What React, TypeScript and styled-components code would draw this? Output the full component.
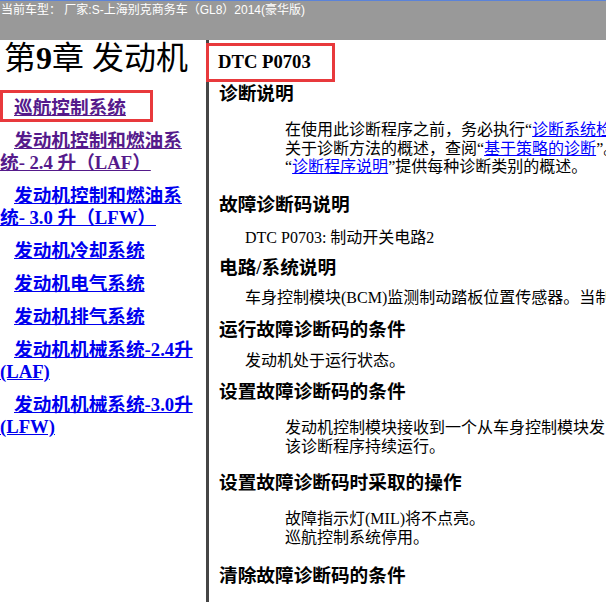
import styled, { createGlobalStyle } from 'styled-components';

const serif = '"Liberation Serif", "Noto Sans CJK SC", serif';

const GlobalStyle = createGlobalStyle`
    html, body {
        margin: 0;
        padding: 0;
        background: #fff;
    }
    body {
        font-family: ${serif};
        color: #000;
    }
`;

const Page = styled.div`
    position: relative;
    display: flex;
    flex-direction: column;
    width: 100vw;
    height: 100vh;
    overflow: hidden;
`;

const TopBar = styled.div`
    flex: 0 0 40px;
    box-sizing: border-box;
    border-top: 1px solid #5b83d9;
    background: #999999;
    color: #fff;
    font-family: "Liberation Sans", "Noto Sans CJK SC", sans-serif;
    font-size: 12px;
    line-height: 18px;
    padding: 0 0 0 1px;
    white-space: nowrap;
`;

const Frames = styled.div`
    flex: 1;
    display: flex;
    min-height: 0;
`;

const Toc = styled.nav`
    flex: 0 0 206px;
    box-sizing: border-box;
    padding: 0 8px 0 0;
    overflow: hidden;
`;

const Chapter = styled.h1`
    margin: 0 0 21px 4px;
    font-size: 32px;
    line-height: 36px;
    font-weight: normal;
    white-space: nowrap;
    & b {
        font-weight: bold;
    }
`;

const TocItem = styled.p`
    margin: 0 0 11px;
    font-size: 18.67px;
    line-height: 22px;
    font-weight: bold;
    text-indent: 14px;
`;

const TocLink = styled.a<{ $visited?: boolean }>`
    color: ${(p) => (p.$visited ? '#551a8b' : '#0000ee')};
    text-decoration: underline;
`;

const Content = styled.main`
    flex: 1;
    min-width: 0;
    box-sizing: border-box;
    border-left: 3px solid #464646;
    padding-left: 9px;
    overflow: hidden;
`;

const DtcTitle = styled.h1`
    margin: 10px 0 0;
    font-size: 18.67px;
    line-height: 24px;
    font-weight: bold;
`;

const Heading = styled.h2<{ $mt: number }>`
    margin: ${(p) => p.$mt}px 0 0 1px;
    font-size: 18.67px;
    line-height: 22px;
    font-weight: bold;
    white-space: nowrap;
`;

// body text is clipped at the frame edge, as in the help viewer
const Text = styled.div<{ $mt: number; $indent: number; $lh?: number }>`
    margin: ${(p) => p.$mt}px 0 0 ${(p) => p.$indent}px;
    font-size: 16px;
    line-height: ${(p) => p.$lh ?? 20}px;
    white-space: nowrap;
    & a {
        color: #0000ff;
        text-decoration: underline;
    }
`;

const Callout = styled.div<{ $x: number; $y: number; $w: number; $h: number }>`
    position: absolute;
    left: ${(p) => p.$x}px;
    top: ${(p) => p.$y}px;
    width: ${(p) => p.$w}px;
    height: ${(p) => p.$h}px;
    box-sizing: border-box;
    border: 3px solid #e8393c;
    pointer-events: none;
`;

const tocItems = [
    { label: '巡航控制系统', visited: true },
    { label: '发动机控制和燃油系统- 2.4 升（LAF）', visited: true },
    { label: '发动机控制和燃油系统- 3.0 升（LFW）' },
    { label: '发动机冷却系统' },
    { label: '发动机电气系统' },
    { label: '发动机排气系统' },
    { label: '发动机机械系统-2.4升(LAF)' },
    { label: '发动机机械系统-3.0升(LFW)' },
];

export default function App() {
    return (
        <Page>
            <GlobalStyle />
            <TopBar>当前车型： 厂家:S-上海别克商务车（GL8）2014(豪华版)</TopBar>
            <Frames>
                <Toc>
                    <Chapter>
                        第<b>9</b>章 发动机
                    </Chapter>
                    {tocItems.map((item) => (
                        <TocItem key={item.label}>
                            <TocLink href="#" $visited={item.visited}>
                                {item.label}
                            </TocLink>
                        </TocItem>
                    ))}
                </Toc>
                <Content>
                    <DtcTitle>DTC P0703</DtcTitle>
                    <Heading $mt={9}>诊断说明</Heading>
                    <Text $mt={16} $indent={67} $lh={18.5}>
                        在使用此诊断程序之前，务必执行“<a href="#">诊断系统检查 - 车辆</a>”。
                        <br />
                        关于诊断方法的概述，查阅“<a href="#">基于策略的诊断</a>”。
                        <br />“<a href="#">诊断程序说明</a>”提供每种诊断类别的概述。
                    </Text>
                    <Heading $mt={17}>故障诊断码说明</Heading>
                    <Text $mt={12} $indent={27}>
                        DTC P0703: 制动开关电路2
                    </Text>
                    <Heading $mt={9}>电路/系统说明</Heading>
                    <Text $mt={9} $indent={27}>
                        车身控制模块(BCM)监测制动踏板位置传感器。当制动踏板被踩下时，车身控制模块通过串行数据向发动机控制模块发送信息。
                    </Text>
                    <Heading $mt={11}>运行故障诊断码的条件</Heading>
                    <Text $mt={10} $indent={27}>
                        发动机处于运行状态。
                    </Text>
                    <Heading $mt={10}>设置故障诊断码的条件</Heading>
                    <Text $mt={15} $indent={67} $lh={19}>
                        发动机控制模块接收到一个从车身控制模块发出的制动开关故障信息。
                        <br />
                        该诊断程序持续运行。
                    </Text>
                    <Heading $mt={16.5}>设置故障诊断码时采取的操作</Heading>
                    <Text $mt={14.5} $indent={67} $lh={19}>
                        故障指示灯(MIL)将不点亮。
                        <br />
                        巡航控制系统停用。
                    </Text>
                    <Heading $mt={18.5}>清除故障诊断码的条件</Heading>
                </Content>
            </Frames>
            <Callout $x={0} $y={90} $w={153} $h={32} />
            <Callout $x={206} $y={43} $w={129} $h={39} />
        </Page>
    );
}
